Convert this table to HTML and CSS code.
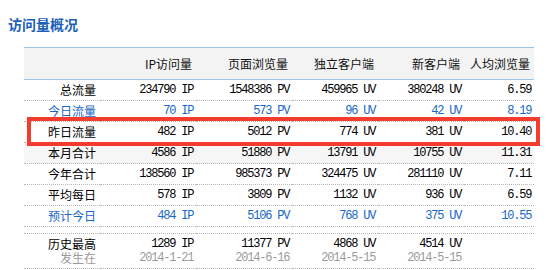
FILE: index.html
```html
<!DOCTYPE html>
<html lang="zh">
<head>
<meta charset="utf-8">
<link rel="stylesheet" href="styles.css">
</head>
<body>
<div class="page">
  <h2 class="title">访问量概况</h2>
  <table class="stats">
    <colgroup>
      <col class="c-label"><col class="c-ip"><col class="c-pv"><col class="c-uv"><col class="c-new"><col class="c-avg">
    </colgroup>
    <thead>
      <tr><th></th><th>IP访问量</th><th>页面浏览量</th><th>独立客户端</th><th>新客户端</th><th>人均浏览量</th></tr>
    </thead>
    <tbody>
      <tr><td class="lbl">总流量</td><td class="n">234790 IP</td><td class="n">1548386 PV</td><td class="n">459965 UV</td><td class="n">380248 UV</td><td class="n">6.59</td></tr>
      <tr class="blue"><td class="lbl">今日流量</td><td class="n">70 IP</td><td class="n">573 PV</td><td class="n">96 UV</td><td class="n">42 UV</td><td class="n">8.19</td></tr>
      <tr><td class="lbl">昨日流量</td><td class="n">482 IP</td><td class="n">5012 PV</td><td class="n">774 UV</td><td class="n">381 UV</td><td class="n">10.40</td></tr>
      <tr class="shade"><td class="lbl">本月合计</td><td class="n">4586 IP</td><td class="n">51880 PV</td><td class="n">13791 UV</td><td class="n">10755 UV</td><td class="n">11.31</td></tr>
      <tr><td class="lbl">今年合计</td><td class="n">138560 IP</td><td class="n">985373 PV</td><td class="n">324475 UV</td><td class="n">281110 UV</td><td class="n">7.11</td></tr>
      <tr><td class="lbl">平均每日</td><td class="n">578 IP</td><td class="n">3809 PV</td><td class="n">1132 UV</td><td class="n">936 UV</td><td class="n">6.59</td></tr>
      <tr class="blue"><td class="lbl">预计今日</td><td class="n">484 IP</td><td class="n">5106 PV</td><td class="n">768 UV</td><td class="n">375 UV</td><td class="n">10.55</td></tr>
      <tr class="gap"><td colspan="6"></td></tr>
      <tr class="hist">
        <td class="lbl">历史最高<br><span class="muted">发生在</span></td>
        <td class="n">1289 IP<br><span class="muted">2014-1-21</span></td>
        <td class="n">11377 PV<br><span class="muted">2014-6-16</span></td>
        <td class="n">4868 UV<br><span class="muted">2014-5-15</span></td>
        <td class="n">4514 UV<br><span class="muted">2014-5-15</span></td>
        <td class="n"></td>
      </tr>
    </tbody>
  </table>
  <div class="highlight"></div>
</div>
</body>
</html>
```
FILE: styles.css
```css
html, body {
  margin: 0;
  padding: 0;
  background: #fff;
}
.page {
  position: relative;
  width: 556px;
  height: 270px;
  overflow: hidden;
  padding: 16px 0 0 8px;
  box-sizing: border-box;
  font-family: "Noto Sans CJK SC", "Liberation Sans", sans-serif;
  font-size: 12px;
  color: #000;
}
.title {
  margin: 0;
  font-size: 14px;
  line-height: 16px;
  font-weight: bold;
  color: #1b60b8;
}
.stats {
  margin: 15px 0 0 16px;
  width: 510px;
  border-collapse: collapse;
  table-layout: fixed;
  border-top: 1px solid #9cc3ef;
}
.c-label { width: 76px; }
.c-ip { width: 96px; }
.c-pv { width: 96px; }
.c-uv { width: 86px; }
.c-new { width: 86px; }
.c-avg { width: 70px; }
.stats th {
  height: 31px;
  padding: 0 4px 0 0;
  background: #f3f3f3;
  border-bottom: 1px solid #9cc3ef;
  font-weight: normal;
  text-align: right;
  white-space: nowrap;
  color: #111;
}
.stats td {
  height: 20px;
  padding: 0 4px 0 0;
  border-bottom: 1px dotted #b8b8b8;
  text-align: right;
  white-space: nowrap;
  line-height: 14px;
}
.stats td.n {
  font-family: "Liberation Mono", "Noto Sans CJK SC", monospace;
  letter-spacing: -1.2px;
  padding-right: 2.8px;
}
.stats tr.blue td {
  color: #1866c6;
}
.stats tr.shade td {
  background: #f6f6f6;
}
.stats tr.gap td {
  height: 6px;
  padding: 0;
}
.stats tr.hist td {
  height: 34px;
}
.muted {
  color: #9a9a9a;
}
.highlight {
  position: absolute;
  left: 27px;
  top: 117px;
  width: 505px;
  height: 21px;
  border: 4px solid #f53b2d;
}
```
